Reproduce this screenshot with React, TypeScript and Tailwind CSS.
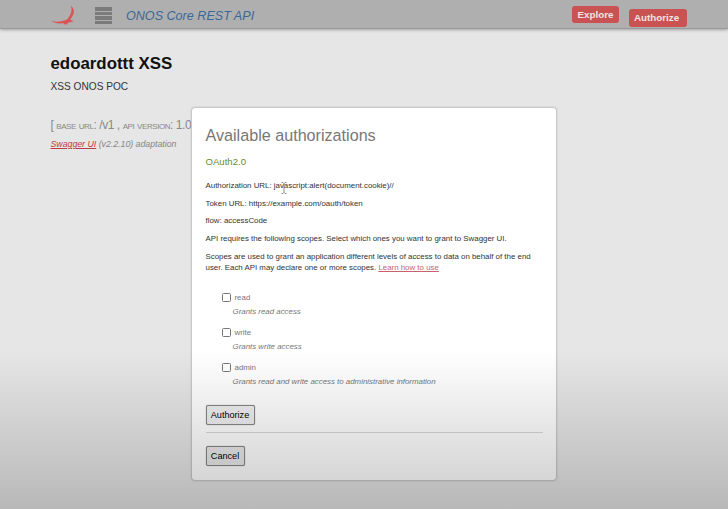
const scopes = [
  { name: 'read', description: 'Grants read access' },
  { name: 'write', description: 'Grants write access' },
  { name: 'admin', description: 'Grants read and write access to administrative information' },
];

function Header() {
  return (
    <header className="flex h-[29px] items-start border-b border-[#989898] bg-[#afafaf] pl-[51px] shadow-[0_1px_3px_rgba(0,0,0,0.3)]">
      <svg className="mt-[5px] h-5 w-6 shrink-0" viewBox="0 0 24 20" fill="#d95555">
        <path d="M20 .8C22.6 2.800 23.600 6.200 22.400 9.300C21.600 11.200 20.500 13 19.200 14.700L22.800 16.200L19.200 17.300C17.500 17.700 16.200 18.400 15.800 19.600L11.500 18.900C12.800 18.700 13.300 18.300 13.200 18C8.500 19.100 3.500 18.300 .2 15.800C4.500 17 8.500 16.900 11.300 16C13 15.400 14.500 15.200 16 14.600C18.500 11.600 20.600 8 20.500 4.700C20.500 3.200 20.300 2 20 .8Z" />
      </svg>
      <div className="mt-[7px] ml-5 flex w-[17px] flex-col gap-px">
        <span className="h-[3.500px] bg-[#7b7b7b]" />
        <span className="h-[3.500px] bg-[#7b7b7b]" />
        <span className="h-[3.500px] bg-[#7b7b7b]" />
        <span className="h-[3.500px] bg-[#7b7b7b]" />
      </div>
      <h1 className="mt-[8px] ml-[14px] text-[12.580px] leading-4 whitespace-nowrap text-[#3c6896] italic">ONOS Core REST API</h1>
      <div className="mr-[41px] ml-auto flex gap-[10px] text-[9.800px] font-bold text-[#f0e4e4]">
        <button className="mt-[6px] h-[17px] w-[47px] rounded-[3px] bg-[#c95252] leading-[17px]">Explore</button>
        <button className="mt-[9px] h-[18px] w-[58px] rounded-[3px] bg-[#c95252] pl-[5px] text-left leading-[18px]">Authorize</button>
      </div>
    </header>
  );
}

function AuthorizationDialog() {
  return (
    <section className="absolute top-[107px] left-[191px] h-[374px] w-[366px] rounded-[4px] border border-[#c8c8c8] bg-white px-[13.500px] text-[7.880px] leading-[11px] text-[#333] shadow-[0_0_2px_rgba(0,0,0,0.15)]">
      <h2 className="mt-[17px] text-[16.150px] leading-5 text-[#777]">Available authorizations</h2>
      <h3 className="mt-[11px] text-[9.600px] leading-3 text-[#6a8c25]">OAuth2.0</h3>
      <p className="mt-[12px]">Authorization URL: javascript:alert(document.cookie)//</p>
      <p className="mt-[6.500px]">Token URL: https://example.com/oauth/token</p>
      <p className="mt-[6.500px]">flow: accessCode</p>
      <p className="mt-[7px]">API requires the following scopes. Select which ones you want to grant to Swagger UI.</p>
      <p className="mt-[7px] whitespace-nowrap">
        Scopes are used to grant an application different levels of access to data on behalf of the end
        <br />
        user. Each API may declare one or more scopes. <a className="text-[#c9616b] underline">Learn how to use</a>
      </p>
      <ul className="mt-[19px] pl-[16px] text-[#777]">
        {scopes.map((scope) => (
          <li key={scope.name} className="h-[35px]">
            <label className="flex h-[11px] items-center gap-[4px]">
              <input type="checkbox" className="size-[9px] appearance-none rounded-[1.500px] border border-[#777] bg-white" />
              {scope.name}
            </label>
            <p className="mt-[2.500px] ml-[11px] whitespace-nowrap italic">{scope.description}</p>
          </li>
        ))}
      </ul>
      <button className="mt-[8px] block h-[20px] w-[49px] rounded-[2px] border border-[#888] bg-[#efefef] text-[9.100px] leading-[18px] text-black shadow-[0_0_1px_#777]">Authorize</button>
      <hr className="mt-[7px] border-[#d8d8d8]" />
      <button className="mt-[13px] block h-[20px] w-[39px] rounded-[2px] border border-[#888] bg-[#e9e9e9] text-[9.100px] leading-[18px] text-black shadow-[0_0_1px_#777]">Cancel</button>
    </section>
  );
}

export default function App() {
  return (
    <div className="relative h-[509px] w-[728px] overflow-hidden bg-[#e6e6e6] font-['Liberation_Sans',Arial,sans-serif]">
      <Header />
      <main className="pl-[50.500px]">
        <h2 className="mt-[25px] text-[16.850px] leading-5 font-bold text-[#111]">edoardottt XSS</h2>
        <p className="mt-[7px] text-[10.150px] leading-3 text-[#333]">XSS ONOS POC</p>
        <p className="mt-[25px] w-[142px] overflow-hidden text-[12px] leading-[14px] tracking-[-0.440px] whitespace-nowrap text-[#888] [font-variant-caps:small-caps]">
          [ base url: <span className="[font-variant-caps:normal]">/v1</span> , api version: 1.0
        </p>
        <p className="mt-[7px] text-[8.750px] leading-[11px] text-[#858585] italic">
          <a className="text-[#b93d42] underline">Swagger UI</a> (v2.2.10) adaptation
        </p>
      </main>
      <AuthorizationDialog />
      <svg className="absolute top-[182px] left-[281px] h-3 w-[6px]" viewBox="0 0 6 12" fill="none" stroke="#888" strokeWidth="1">
        <path d="M.5 .5H2L3 1.500L4 .5H5.500M3 1.500V10.500M.5 11.500H2L3 10.500L4 11.500H5.500" />
      </svg>
      <div className="pointer-events-none absolute inset-x-0 bottom-0 h-[159px] bg-linear-to-b from-transparent to-black/20" />
    </div>
  );
}
